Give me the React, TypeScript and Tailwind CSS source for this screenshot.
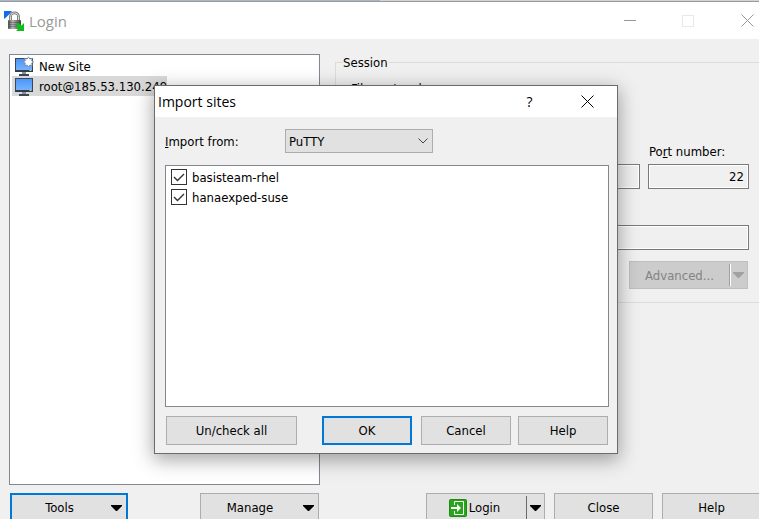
import { useState } from "react";
import type { ReactNode } from "react";

const BTN = "flex items-center justify-center border border-[#adadad] bg-[#e1e1e1]";
const FIELD = "h-[25px] min-w-0 border border-[#7a7a7a] bg-[#f0f0f0] px-1 shadow-[inset_0_0_0_1px_#fff]";

function CloseGlyph() {
  return (
    <svg width="13" height="13" viewBox="0 0 13 13" fill="none" stroke="currentColor" aria-hidden="true">
      <path d="M.5.5l12 12M12.5.5l-12 12" />
    </svg>
  );
}

function DownArrow() {
  return (
    <svg width="11" height="6" viewBox="0 0 11 6" fill="currentColor" aria-hidden="true">
      <path d="M0 0h11v1L6 6H5L0 1z" />
    </svg>
  );
}

function Monitor({ star = false }: { star?: boolean }) {
  return (
    <svg className="shrink-0" width="20" height="20" viewBox="0 0 20 20" aria-hidden="true">
      <defs>
        <linearGradient id="screen" x1="0" y1="0" x2="0" y2="1">
          <stop offset="0" stopColor="#4796f7" />
          <stop offset="1" stopColor="#7db6ff" />
        </linearGradient>
      </defs>
      <rect x="1.500" y="2.500" width="17" height="13" fill="url(#screen)" stroke="#3c4654" />
      <path d="M1 14h18v2H1z" fill="#333d4a" />
      <path d="M15.500 14.500h2" stroke="#8cff5a" />
      <path d="M8 16h4v2H8z" fill="#8a929c" />
      <path d="M5 18h10v2H5z" fill="#3c4654" />
      {star && (
        <path
          d="M14.500.8l1.300 2.200 2.500-.6-.7 2.400 2.200 1.200-2.200 1.200.7 2.400-2.500-.6-1.300 2.200-1.300-2.200-2.500.6.7-2.400L9.200 6l2.200-1.200-.7-2.400 2.500.6z"
          fill="#fff"
          stroke="#7389a8"
          strokeWidth=".8"
        />
      )}
    </svg>
  );
}

function AppIcon() {
  return (
    <svg width="20" height="20" viewBox="0 0 20 20" aria-hidden="true">
      <defs>
        <linearGradient id="metal" x1="0" y1="0" x2="1" y2="0">
          <stop offset="0" stopColor="#4a4a4a" />
          <stop offset=".35" stopColor="#b5b5b5" />
          <stop offset="1" stopColor="#3f3f3f" />
        </linearGradient>
      </defs>
      <path d="M0 0h8L6 2.500 2.500 6 0 8z" fill="#126be8" />
      <path d="M6.500 10V5.500a4 3.700 0 0 1 8 0V10" fill="none" stroke="#777" strokeWidth="2.800" />
      <path d="M6.500 10V5.500a4 3.700 0 0 1 8 0V10" fill="none" stroke="#ddd" strokeWidth="1" />
      <rect x="4" y="9" width="13" height="9" rx="1" fill="url(#metal)" />
      <path d="M5 11.500h11M5 13.500h11M5 15.500h11" stroke="#333" strokeOpacity=".35" />
      <path d="M20 20h-8l2.500-2.500-3-3 3-3 3 3L20 12z" fill="#0bbf1b" />
    </svg>
  );
}

function LoginIcon() {
  return (
    <svg width="18" height="18" viewBox="0 0 18 18" aria-hidden="true">
      <rect x=".5" y=".5" width="17" height="17" rx="1" fill="#27a51b" stroke="#208815" />
      <path d="M5.500 6V2.500h9v13h-9V12" fill="none" stroke="#fff" />
      <path d="M2 8h6V5l4 4-4 4v-3H2z" fill="#fff" />
    </svg>
  );
}

function ImportRow({ children }: { children: ReactNode }) {
  const [on, setOn] = useState(true);
  return (
    <label className="flex h-5 items-center gap-[5px]">
      <span className="relative size-4">
        <input
          type="checkbox"
          checked={on}
          onChange={() => setOn(!on)}
          className="peer block size-4 appearance-none border border-[#333] bg-white"
        />
        <svg
          className="pointer-events-none absolute inset-0 hidden peer-checked:block"
          width="16"
          height="16"
          viewBox="0 0 16 16"
          fill="none"
          stroke="#333"
          strokeWidth="1.400"
          aria-hidden="true"
        >
          <path d="M3 8l3.500 3.500L13 5" />
        </svg>
      </span>
      <span className="pt-px">{children}</span>
    </label>
  );
}

function ImportDialog() {
  return (
    <section
      role="dialog"
      aria-label="Import sites"
      className="absolute left-[154px] top-[85px] flex h-[369px] w-[464px] flex-col border border-[#6b6b6b] bg-[#f0f0f0] shadow-[0_5px_18px_1px_rgba(0,0,0,0.35)]"
    >
      <header className="flex h-[31px] items-center bg-white pl-[3px]">
        <h2 className="flex-1 font-['Open_Sans',sans-serif] text-sm">Import sites</h2>
        <button aria-label="Help" className="flex w-[57px] justify-center font-['Open_Sans',sans-serif] text-sm">?</button>
        <button aria-label="Close" className="flex w-[59px] justify-center"><CloseGlyph /></button>
      </header>
      <div className="flex min-h-0 flex-1 flex-col pt-3 pr-2 pb-2 pl-[10px]">
        <div className="flex items-center">
          <label htmlFor="source" className="w-[120px] pt-px"><u>I</u>mport from:</label>
          <div className="relative w-[148px]">
            <select id="source" className="block h-6 w-full appearance-none border border-[#adadad] bg-[#e1e1e1] px-[3px] pt-px">
              <option>PuTTY</option>
            </select>
            <svg className="pointer-events-none absolute top-[9px] right-[5px]" width="10" height="6" viewBox="0 0 10 6" fill="none" stroke="#444" aria-hidden="true">
              <path d="M.5.5L5 5 9.500.5" />
            </svg>
          </div>
        </div>
        <div className="mt-3 min-h-0 flex-1 border border-[#828790] bg-white pt-px pl-[5px]">
          <ImportRow>basisteam-rhel</ImportRow>
          <ImportRow>hanaexped-suse</ImportRow>
        </div>
        <div className="mt-[9px] flex h-[29px] pr-px pl-px">
          <button className={`${BTN} w-[131px]`}>Un/check all</button>
          <button className="ml-auto w-[90px] border-2 border-[#0078d7] bg-[#e1e1e1]">OK</button>
          <button className={`${BTN} ml-[9px] w-[90px]`}>Cancel</button>
          <button className={`${BTN} ml-[7px] w-[90px]`}>Help</button>
        </div>
      </div>
    </section>
  );
}

function SessionBox() {
  return (
    <fieldset className="-mr-3 ml-[15px] h-[249px] min-w-0 flex-1 self-start border border-[#dcdcdc] pr-[21px] pl-[15px]">
      <legend className="-ml-2 h-4 pr-px leading-[18px]">Session</legend>
      <div className="flex flex-col pt-[11px]">
        <label htmlFor="protocol">File protocol:</label>
        <select id="protocol" disabled className={`${FIELD} mt-1 w-[120px] appearance-none`}>
          <option>SFTP</option>
        </select>
        <div className="mt-[18px] flex gap-2">
          <div className="flex min-w-0 flex-1 flex-col gap-1">
            <label htmlFor="host">Host name:</label>
            <input id="host" readOnly className={FIELD} />
          </div>
          <div className="flex w-[101px] flex-col gap-1">
            <label htmlFor="port" className="pl-px">Po<u>r</u>t number:</label>
            <input id="port" readOnly value="22" className={`${FIELD} text-right`} />
          </div>
        </div>
        <div className="mt-4 flex gap-2">
          <div className="flex w-[150px] flex-col gap-1">
            <label htmlFor="user">User name:</label>
            <input id="user" readOnly className={FIELD} />
          </div>
          <div className="flex min-w-0 flex-1 flex-col gap-1">
            <label htmlFor="password">Password:</label>
            <input id="password" type="password" readOnly className={FIELD} />
          </div>
        </div>
        <button disabled className="mt-[11px] mr-px flex h-7 w-[119px] items-center self-end border border-[#bfbfbf] bg-[#ccc] text-[#838383]">
          <span className="flex-1 pt-px">Advanced...</span>
          <span className="flex h-[22px] w-[18px] items-center justify-center border-l border-[#a0a0a0] text-[#a0a0a0] shadow-[inset_1px_0_0_#fff]">
            <DownArrow />
          </span>
        </button>
      </div>
    </fieldset>
  );
}

export default function App() {
  return (
    <div className="relative flex h-screen flex-col overflow-hidden bg-[#f0f0f0] font-['DejaVu_Sans_Condensed','Noto_Sans',sans-serif] text-[13px] leading-4 text-black">
      <div className="flex h-[2px] shrink-0 border-b border-[#9a9a9a] bg-[#d4d4d4]">
        <div className="w-1/2 bg-[#a9b8c9]" />
      </div>
      <header className="flex h-[37px] shrink-0 items-center bg-white pr-[5px] pl-1 text-[#999]">
        <AppIcon />
        <h1 className="ml-[5px] flex-1 font-['Open_Sans',sans-serif] text-[15px]">Login</h1>
        <button aria-label="Minimize" className="flex h-3 w-3 items-center"><span className="h-px w-full bg-[#999]" /></button>
        <button aria-label="Maximize" disabled className="ml-[46px] size-3 border border-[#e8e8e8]" />
        <button aria-label="Close" className="ml-[47px]"><CloseGlyph /></button>
      </header>
      <main className="flex min-h-0 flex-1 pt-[15px] pl-[9px]">
        <ul className="w-[311px] shrink-0 border border-[#828790] bg-white pt-px pl-[2px]">
          <li className="flex h-5 items-center gap-[5px] pl-[2px]"><Monitor star /><span className="pt-px">New Site</span></li>
          <li className="flex h-5 w-[155px] items-center gap-[5px] bg-[#d9d9d9] pl-[2px] whitespace-nowrap"><Monitor /><span className="pt-px">root@185.53.130.249</span></li>
        </ul>
        <SessionBox />
      </main>
      <footer className="mt-2 flex h-[26px] shrink-0 items-start overflow-hidden pl-[10px]">
        <div className="flex w-[309px] shrink-0 justify-between">
          <button className="flex h-[29px] w-[118px] items-center border-2 border-[#0078d7] bg-[#e1e1e1] pr-1">
            <span className="flex-1 pr-1">Tools</span><DownArrow />
          </button>
          <button className={`${BTN} h-[29px] w-[119px] pr-1`}>
            <span className="flex-1 pr-1">Manage</span><DownArrow />
          </button>
        </div>
        <div className="-mr-[2px] flex flex-1 justify-end gap-[9px]">
          <button className={`${BTN} h-[29px] w-[119px]`}>
            <span className="flex flex-1 items-center justify-center gap-[2px] pr-1"><LoginIcon />Login</span>
            <span className="flex h-[23px] w-[18px] items-center justify-center border-l border-[#696969]"><DownArrow /></span>
          </button>
          <button className={`${BTN} h-[29px] w-[99px]`}>Close</button>
          <button className={`${BTN} h-[29px] w-[99px]`}>Help</button>
        </div>
      </footer>
      <ImportDialog />
    </div>
  );
}
